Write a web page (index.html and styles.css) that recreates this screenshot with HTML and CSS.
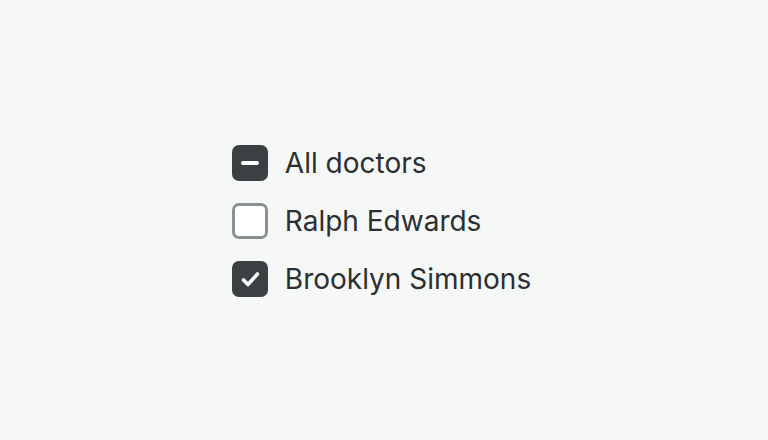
FILE: index.html
```html
<!DOCTYPE html>
<html>
<head>
    <meta charset="utf-8"/>
    <title>Doctors filter</title>
    <link rel="stylesheet" href="styles.css">
</head>
<body>
    <div class="list">
        <label class="item">
            <span class="box box-on">
                <svg width="36" height="36" viewBox="0 0 36 36"><path d="M11 18h14" stroke="#fff" stroke-width="4" stroke-linecap="round"/></svg>
            </span>
            <span class="label">All doctors</span>
        </label>
        <label class="item">
            <span class="box box-off"></span>
            <span class="label">Ralph Edwards</span>
        </label>
        <label class="item">
            <span class="box box-on">
                <svg width="36" height="36" viewBox="0 0 36 36"><path d="M11.5 19l4.5 4.5 9.5-10.5" fill="none" stroke="#fff" stroke-width="3.6" stroke-linecap="round" stroke-linejoin="round"/></svg>
            </span>
            <span class="label">Brooklyn Simmons</span>
        </label>
    </div>
</body>
</html>
```

FILE: styles.css
```css
html, body {
    height: 100%;
}
body {
    margin: 0;
    background-color: #f6f8f7;
    font-family: Inter, "Noto Sans", sans-serif;
    display: flex;
    align-items: center;
    justify-content: center;
}
.list {
    display: flex;
    flex-direction: column;
    gap: 22px;
    margin-right: 5px;
    margin-top: 2px;
}
.item {
    display: flex;
    align-items: center;
    gap: 17px;
    height: 36px;
}
.box {
    width: 36px;
    height: 36px;
    box-sizing: border-box;
    border-radius: 7px;
    display: flex;
    align-items: center;
    justify-content: center;
}
.box-on {
    background-color: #3b4042;
}
.box-off {
    background-color: #fff;
    border: 3px solid #8a918f;
}
.label {
    font-size: 28px;
    color: #2b2f31;
}
```
